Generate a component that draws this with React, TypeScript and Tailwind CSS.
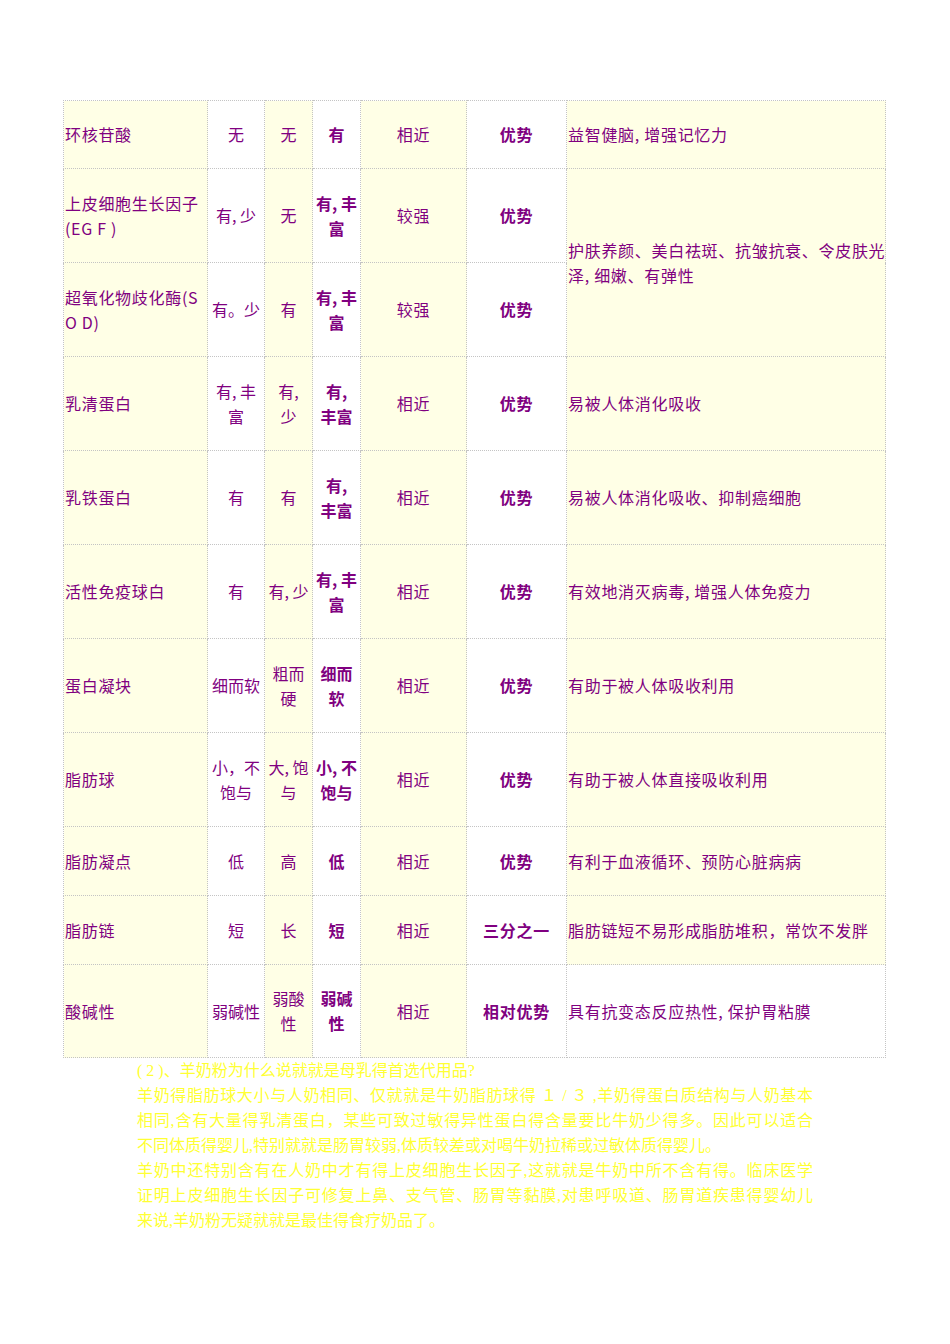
const cjk = { fontFamily: '"Noto Sans CJK SC", "Liberation Sans", sans-serif' };
const serif = { fontFamily: '"Liberation Serif", "Noto Sans CJK SC", serif' };

type Row = {
  h: number;
  name: React.ReactNode;
  a: React.ReactNode;
  b: React.ReactNode;
  c: React.ReactNode;
  d: string;
  e: string;
  f?: React.ReactNode;
  span?: number;
  fWhite?: boolean;
};

const rows: Row[] = [
  { h: 68, name: "环核苷酸", a: "无", b: "无", c: "有", d: "相近", e: "优势", f: "益智健脑, 增强记忆力" },
  {
    h: 94,
    name: (<>上皮细胞生长因子<br />(EG F )</>),
    a: "有, 少",
    b: "无",
    c: (<>有, 丰<br />富</>),
    d: "较强",
    e: "优势",
    f: (<>护肤养颜、美白祛斑、抗皱抗衰、令皮肤光<br />泽, 细嫩、有弹性</>),
    span: 2,
  },
  {
    h: 94,
    name: (<>超氧化物歧化酶(S<br />O D)</>),
    a: "有。少",
    b: "有",
    c: (<>有, 丰<br />富</>),
    d: "较强",
    e: "优势",
  },
  {
    h: 94,
    name: "乳清蛋白",
    a: (<>有, 丰<br />富</>),
    b: (<>有,<br />少</>),
    c: (<>有,<br />丰富</>),
    d: "相近",
    e: "优势",
    f: "易被人体消化吸收",
  },
  { h: 94, name: "乳铁蛋白", a: "有", b: "有", c: (<>有,<br />丰富</>), d: "相近", e: "优势", f: "易被人体消化吸收、抑制癌细胞" },
  { h: 94, name: "活性免疫球白", a: "有", b: "有, 少", c: (<>有, 丰<br />富</>), d: "相近", e: "优势", f: "有效地消灭病毒, 增强人体免疫力" },
  { h: 94, name: "蛋白凝块", a: "细而软", b: (<>粗而<br />硬</>), c: (<>细而<br />软</>), d: "相近", e: "优势", f: "有助于被人体吸收利用" },
  {
    h: 94,
    name: "脂肪球",
    a: (<>小，不<br />饱与</>),
    b: (<>大, 饱<br />与</>),
    c: (<>小, 不<br />饱与</>),
    d: "相近",
    e: "优势",
    f: "有助于被人体直接吸收利用",
  },
  { h: 69, name: "脂肪凝点", a: "低", b: "高", c: "低", d: "相近", e: "优势", f: "有利于血液循环、预防心脏病病" },
  { h: 69, name: "脂肪链", a: "短", b: "长", c: "短", d: "相近", e: "三分之一", f: "脂肪链短不易形成脂肪堆积，常饮不发胖" },
  {
    h: 93,
    name: "酸碱性",
    a: "弱碱性",
    b: (<>弱酸<br />性</>),
    c: (<>弱碱<br />性</>),
    d: "相近",
    e: "相对优势",
    f: "具有抗变态反应热性, 保护胃粘膜",
    fWhite: true,
  },
];

const cell = "border border-dotted border-[#c4c4c4] p-0 align-middle";
const yellow = "bg-[#ffffe6]";

const lines: { t: string; j: boolean }[] = [
  { t: "( 2 )、羊奶粉为什么说就就是母乳得首选代用品?", j: false },
  { t: "羊奶得脂肪球大小与人奶相同、仅就就是牛奶脂肪球得 １ / ３ ,羊奶得蛋白质结构与人奶基本", j: true },
  { t: "相同,含有大量得乳清蛋白，某些可致过敏得异性蛋白得含量要比牛奶少得多。因此可以适合", j: true },
  { t: "不同体质得婴儿,特别就就是肠胃较弱,体质较差或对喝牛奶拉稀或过敏体质得婴儿。", j: false },
  { t: "羊奶中还特别含有在人奶中才有得上皮细胞生长因子,这就就是牛奶中所不含有得。临床医学", j: true },
  { t: "证明上皮细胞生长因子可修复上鼻、支气管、肠胃等黏膜,对患呼吸道、肠胃道疾患得婴幼儿", j: true },
  { t: "来说,羊奶粉无疑就就是最佳得食疗奶品了。", j: false },
];

export default function App() {
  return (
    <div className="w-[950px] min-h-[1344px] bg-white pt-[100px]">
      <table
        className="ml-[63px] w-[822px] table-fixed border-collapse text-[16px] leading-[25px] tracking-[0.7px] text-[#800080]"
        style={cjk}
      >
        <colgroup>
          <col className="w-[144px]" />
          <col className="w-[57px]" />
          <col className="w-[48px]" />
          <col className="w-[48px]" />
          <col className="w-[106px]" />
          <col className="w-[100px]" />
          <col className="w-[319px]" />
        </colgroup>
        <tbody>
          {rows.map((r, i) => (
            <tr key={i} style={{ height: r.h }}>
              <td className={`${cell} ${yellow} pl-[1px] text-left whitespace-nowrap`}>{r.name}</td>
              <td className={`${cell} bg-white text-center whitespace-nowrap tracking-normal`}>{r.a}</td>
              <td className={`${cell} ${yellow} text-center whitespace-nowrap tracking-normal`}>{r.b}</td>
              <td className={`${cell} bg-white text-center font-bold whitespace-nowrap tracking-normal`}>{r.c}</td>
              <td className={`${cell} ${yellow} text-center`}>{r.d}</td>
              <td className={`${cell} bg-white text-center font-bold`}>{r.e}</td>
              {r.f !== undefined && (
                <td
                  rowSpan={r.span ?? 1}
                  className={`${cell} ${r.fWhite ? "bg-white" : yellow} pl-[1px] text-left whitespace-nowrap`}
                >
                  {r.f}
                </td>
              )}
            </tr>
          ))}
        </tbody>
      </table>
      <div className="ml-[137px] w-[676px] text-[16px] leading-[25px] text-[#ffff33]" style={serif}>
        {lines.map((l, i) => (
          <div key={i} className={l.j ? "text-justify [text-align-last:justify]" : ""}>
            {l.t}
          </div>
        ))}
      </div>
    </div>
  );
}
